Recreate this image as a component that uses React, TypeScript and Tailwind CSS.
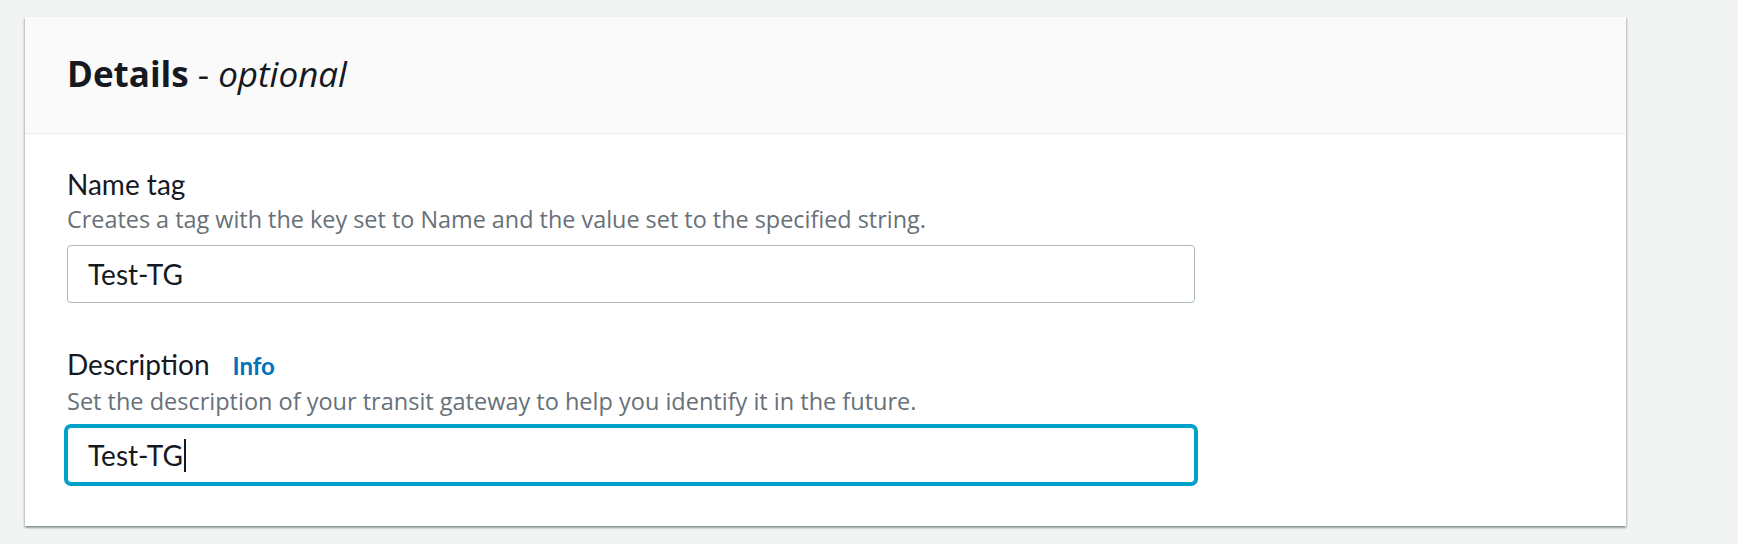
import React from "react";

const lato = { fontFamily: "Lato, 'Open Sans', sans-serif" };
const open = { fontFamily: "'Open Sans', Roboto, sans-serif" };

export default function App() {
  return (
    <div
      className="min-h-[544px] w-full bg-[#f2f3f3] pt-[17px] pl-[25px] pr-[112px] pb-[19px]"
      style={lato}
    >
      <div className="bg-white shadow-[0_2px_2px_0_rgba(0,28,36,0.3),1px_1px_2px_0_rgba(0,28,36,0.15),-1px_1px_2px_0_rgba(0,28,36,0.15)]">
        <div className="flex h-[117px] items-center border-b border-[#eaeded] bg-[#fafafa] px-[42px] pb-[2px]">
          <h2 className="text-[35px] leading-[40px] text-[#16191f]" style={open}>
            <span className="font-bold">Details</span>
            <span className="font-normal"> - </span>
            <span className="font-normal italic">optional</span>
          </h2>
        </div>
        <div className="px-[42px] pt-[33px] pb-[43px]">
          <div className="flex flex-col">
            <label className="text-[28px] leading-[34px] text-[#16191f]">Name tag</label>
            <p className="mt-[2px] text-[23.4px] leading-[32px] text-[#687078]" style={open}>
              Creates a tag with the key set to Name and the value set to the specified string.
            </p>
            <div className="mt-[10px] flex h-[58px] w-[1128px] items-center rounded-[4px] border border-[#aab7b8] bg-white px-[20px] text-[28px] text-[#16191f]">
              Test-TG
            </div>
          </div>
          <div className="mt-[44px] flex flex-col">
            <div className="flex items-baseline gap-[23px]">
              <label className="text-[28px] leading-[34px] text-[#16191f]">Description</label>
              <a className="text-[24px] font-bold leading-[34px] text-[#0073bb]">Info</a>
            </div>
            <p className="mt-[2px] text-[23.5px] leading-[32px] text-[#687078]" style={open}>
              Set the description of your transit gateway to help you identify it in the future.
            </p>
            <div className="mt-[10px] flex h-[56px] w-[1128px] items-center rounded-[4px] border border-[#00a1c9] bg-white px-[20px] text-[28px] text-[#16191f] shadow-[0_0_0_3px_#00a1c9]">
              <span>Test-TG</span>
              <span className="ml-[1px] inline-block h-[33px] w-[2px] bg-[#16191f]" />
            </div>
          </div>
        </div>
      </div>
    </div>
  );
}
